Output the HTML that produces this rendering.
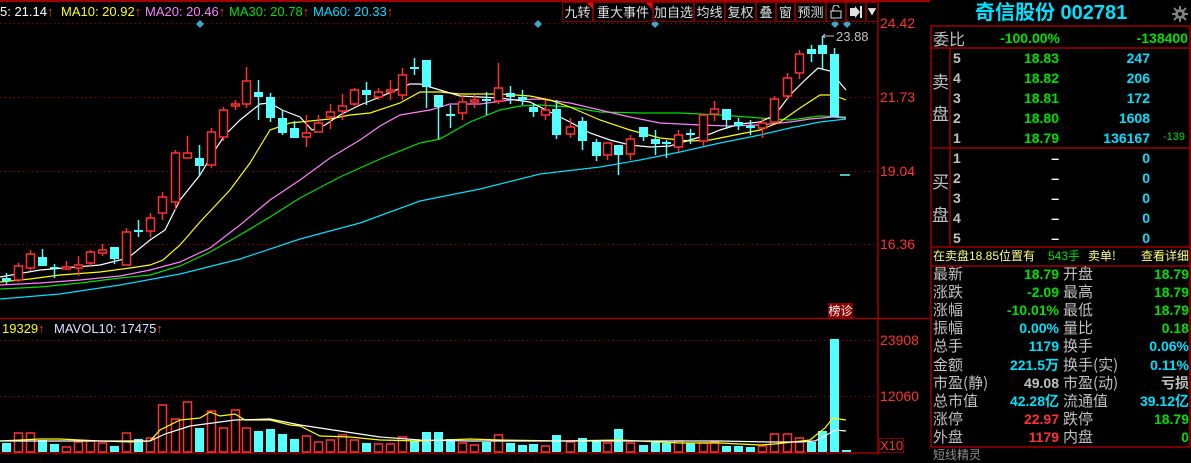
<!DOCTYPE html>
<html><head><meta charset="utf-8"><style>
*{margin:0;padding:0;box-sizing:border-box}
body{width:1191px;height:455px;background:#000;overflow:hidden;position:relative;font-family:"Liberation Sans","Noto Sans CJK SC",sans-serif;}
.t{position:absolute;white-space:nowrap;line-height:1}
.ar{color:#ff3232;font-weight:bold;font-size:13px}
.ax{position:absolute;color:#ff3232;font-size:14px;left:880px;line-height:1}
.btn{position:absolute;top:2px;height:20px;border:1px solid #800000;color:#e0e0e0;font-size:13px;line-height:18px;text-align:center;white-space:nowrap;overflow:hidden;font-family:"Noto Sans CJK SC",sans-serif}
.lbl{position:absolute;color:#c0c0c0;font-size:15px;font-family:"Noto Sans CJK SC",sans-serif;line-height:1;white-space:nowrap}
.v{position:absolute;font-size:14px;font-weight:bold;line-height:1;text-align:right;white-space:nowrap}
</style></head><body>
<svg width="1191" height="455" style="position:absolute;left:0;top:0">
<line x1="0" y1="1" x2="930" y2="1" stroke="#a00000" stroke-width="2"/>
<g stroke="#900000" stroke-dasharray="1.5,3" stroke-width="1">
<line x1="0" y1="23.5" x2="876" y2="23.5"/><line x1="0" y1="97.5" x2="876" y2="97.5"/>
<line x1="0" y1="171.5" x2="876" y2="171.5"/><line x1="0" y1="244.5" x2="876" y2="244.5"/>
<line x1="0" y1="340.5" x2="876" y2="340.5"/><line x1="0" y1="396.5" x2="876" y2="396.5"/>
</g>
<g stroke="#a00000" stroke-width="1.5">
<line x1="878" y1="0" x2="878" y2="455"/><line x1="0" y1="318.5" x2="930" y2="318.5"/>
<line x1="0" y1="453" x2="878" y2="453"/>
</g>
<g fill="#3fa7c8">
<path d="M200 20l4 4-4 4-4-4z"/><path d="M538 20l4 4-4 4-4-4z"/><path d="M655 20l4 4-4 4-4-4z"/><path d="M835 20l4 4-4 4-4-4z"/><path d="M847 20l4 4-4 4-4-4z"/>
</g>
<g fill="none" stroke-width="1.2">
<polyline stroke="#00e0ff" points="0,299 60,294 120,285 180,274 240,259 300,239 360,223 420,201 480,189 540,174 600,167 640,160 680,152 720,143 760,135 790,128 820,122 846,119"/>
<polyline stroke="#00e000" points="0,289 40,287 80,283 120,278 150,275 180,266 210,252 240,235 270,217 300,198 340,177 380,159 420,143 440,139 470,122 500,110 520,106 540,105 570,107 600,112 640,113 680,113 720,115 760,118 790,120 820,116 846,117"/>
<polyline stroke="#ff80ff" points="0,285 40,283 80,280 120,276 150,270 180,262 210,248 240,225 270,200 300,180 330,158 360,140 380,126 400,115 430,110 450,104 480,104 510,100 540,99 570,103 600,110 630,117 660,123 700,125 730,126 760,125 790,122 810,119 833,117 846,118"/>
<polyline stroke="#ffff00" points="0,282 30,279 60,275 100,272 130,268 150,265 163,260 180,245 200,222 230,190 250,163 270,130 290,123 310,121 330,119 350,115 370,113 400,103 420,92 440,92 460,94 500,94 530,96 550,100 570,107 600,120 630,130 660,138 690,141 710,140 730,136 760,130 780,122 800,108 820,95 833,95 846,100"/>
<polyline stroke="#ffffff" points="0,277 40,270 100,265 128,258 150,240 165,230 180,200 200,175 215,150 225,135 240,120 260,104 270,103 282,110 300,117 312,130 325,125 340,115 360,105 380,97 410,84 420,84 440,90 460,96 480,97 500,98 530,102 550,112 570,122 590,133 610,140 630,145 650,147 670,146 690,140 710,134 720,130 740,124 760,122 775,115 790,95 805,80 818,68 830,71 846,90"/>
</g>
<line x1="840" y1="175" x2="850" y2="175" stroke="#54ffff" stroke-width="1.5"/>
<g id="candles" stroke-width="1.5"></g>
<g id="vols"></g>
<g fill="none" stroke-width="1.2">
<polyline stroke="#ffff00" points="0,441 40,439 60,439 100,441 130,442 150,441 160,430 180,420 200,418 210,412 220,416 235,414 245,420 270,420 290,425 300,426 320,436 350,437 380,440 420,441 470,439 500,440 560,441 620,440 680,443 720,443 760,445 775,444 810,440 825,428 833,418 846,420"/>
<polyline stroke="#ffffff" points="0,441 60,441 120,441 150,441 165,434 190,426 220,422 235,420 270,419 300,425 340,431 380,437 420,440 470,441 520,441 560,441 620,441 680,441 720,441 770,442 800,442 815,441 825,436 835,430 846,431"/>
</g>
<path d="M826 36h-3l2-2m-2 2l2 2" stroke="#c0c0c0" fill="none"/>
<line x1="823" y1="36" x2="834" y2="36" stroke="#c0c0c0"/>
<rect x="931" y="26" width="259" height="421" fill="none" stroke="#a00000" stroke-width="1.5"/>
<g stroke="#a00000" stroke-width="1.5">
<line x1="931" y1="48" x2="1190" y2="48"/><line x1="931" y1="148" x2="1190" y2="148"/>
<line x1="931" y1="247" x2="1190" y2="247"/><line x1="931" y1="266" x2="1190" y2="266"/>
<line x1="950" y1="48" x2="950" y2="247"/>
</g>
<g fill="#808080"><circle cx="1180" cy="14" r="5"/></g>
<g stroke="#808080" stroke-width="2"><line x1="1180" y1="6" x2="1180" y2="22"/><line x1="1172" y1="14" x2="1188" y2="14"/><line x1="1174" y1="8" x2="1186" y2="20"/><line x1="1186" y1="8" x2="1174" y2="20"/></g>
<circle cx="1180" cy="14" r="2" fill="#000"/>
</svg>
<script>
var C=[[6,'c',278,281,273,284],[18,'r',266,280,263,282],[30,'r',254,268,250,271],[42,'c',257,266,249,266],[54,'c',267,268,264,278],[66,'r',267,269,261,270],[78,'r',265,268,256,276],[90,'r',252,263,250,267],[102,'r',250,253,244,256],[114,'c',247,259,247,264],[126,'r',232,265,228,265],[138,'c',230,232,220,237],[150,'r',218,231,213,237],[162,'r',197,213,192,220],[175,'r',153,202,150,210],[187,'r',153,158,136,158],[199,'c',158,166,145,175],[211,'r',132,165,128,168],[223,'r',110,137,107,141],[235,'r',104,106,100,110],[246,'r',81,104,67,108],[258,'c',92,97,80,120],[270,'c',97,118,93,122],[282,'c',118,133,110,135],[294,'c',128,138,121,138],[306,'r',133,137,115,147],[318,'r',123,132,115,132],[330,'r',112,117,104,129],[342,'r',106,111,94,120],[354,'r',90,104,88,106],[366,'c',90,95,82,105],[378,'r',92,97,88,100],[390,'r',90,92,80,100],[402,'r',75,95,68,100],[414,'c',67,69,58,75],[426,'c',60,87,60,108],[438,'c',95,107,95,139],[450,'c',114,116,105,128],[462,'r',102,113,95,120],[474,'r',100,102,95,108],[486,'c',99,101,92,115],[498,'r',88,101,63,104],[510,'c',93,97,86,104],[522,'c',97,100,90,105],[533,'c',107,112,103,117],[545,'r',110,115,100,120],[556,'c',109,135,100,139],[570,'r',127,134,118,138],[582,'c',121,141,117,150],[596,'c',142,156,139,161],[607,'r',143,155,143,160],[618,'c',145,155,145,175],[630,'r',139,154,135,160],[643,'c',127,137,127,141],[655,'c',139,144,130,155],[666,'c',142,144,140,158],[678,'r',135,147,130,152],[690,'c',133,135,129,144],[703,'r',115,141,115,146],[714,'r',109,114,101,121],[726,'c',109,120,109,129],[738,'c',122,126,118,130],[750,'c',126,128,120,135],[762,'r',123,128,118,138],[774,'r',99,122,96,123],[787,'r',78,96,73,100],[799,'r',54,73,50,79],[811,'c',49,54,45,62],[822,'c',45,54,36,70],[834,'c',54,117,48,117]];
var s='';C.forEach(function(d){var x=d[0],col=d[1]=='r'?'#ff3232':'#54ffff';s+='<line x1="'+(x+.5)+'" y1="'+d[4]+'" x2="'+(x+.5)+'" y2="'+d[5]+'" stroke="'+col+'"/>';var h=Math.max(d[3]-d[2],1.5);if(d[1]=='r')s+='<rect x="'+(x-3.5)+'" y="'+d[2]+'" width="8" height="'+h+'" fill="#000" stroke="'+col+'"/>';else s+='<rect x="'+(x-4)+'" y="'+d[2]+'" width="9" height="'+h+'" fill="'+col+'" stroke="none"/>';});
document.getElementById('candles').innerHTML=s;
var V=[[6,'c',443],[18,'r',433],[30,'r',433],[42,'c',440],[54,'c',444],[66,'r',447],[78,'r',442],[90,'r',441],[102,'r',443],[114,'c',446],[126,'r',433],[138,'c',439],[150,'r',438],[162,'r',405],[175,'r',419],[187,'r',402],[199,'c',428],[211,'r',411],[223,'r',428],[235,'r',410],[246,'r',428],[258,'c',431],[270,'c',429],[282,'c',434],[294,'c',439],[306,'r',436],[318,'r',442],[330,'r',440],[342,'r',435],[354,'r',440],[366,'c',443],[378,'r',444],[390,'r',444],[402,'r',437],[414,'c',441],[426,'c',432],[438,'c',432],[450,'c',439],[462,'r',443],[474,'r',445],[486,'c',442],[498,'r',435],[510,'c',443],[522,'c',445],[533,'c',444],[545,'r',446],[556,'c',435],[570,'r',442],[582,'c',438],[596,'c',441],[607,'r',443],[618,'c',429],[630,'r',443],[643,'c',445],[655,'c',441],[666,'c',443],[678,'r',441],[690,'c',443],[703,'r',443],[714,'r',442],[726,'c',446],[738,'c',446],[750,'c',447],[762,'r',446],[774,'r',434],[787,'r',434],[799,'r',438],[811,'c',442],[822,'c',431],[834,'c',339],[846,'c',450]];
s='';V.forEach(function(d){var x=d[0];if(d[1]=='r')s+='<rect x="'+(x-3.5)+'" y="'+d[2]+'" width="8" height="'+(452-d[2])+'" fill="none" stroke="#ff3232" stroke-width="1.5"/>';else s+='<rect x="'+(x-4)+'" y="'+d[2]+'" width="9" height="'+(452-d[2])+'" fill="#54ffff"/>';});
document.getElementById('vols').innerHTML=s;
</script>

<div class="t" style="left:0;top:5px;font-size:13px;color:#fff">5: 21.14<span class="ar">↑</span></div>
<div class="t" style="left:61px;top:5px;font-size:13px;color:#ffff00">MA10: 20.92<span class="ar">↑</span></div>
<div class="t" style="left:145px;top:5px;font-size:13px;color:#ff80ff">MA20: 20.46<span class="ar">↑</span></div>
<div class="t" style="left:229px;top:5px;font-size:13px;color:#00e000">MA30: 20.78<span class="ar">↑</span></div>
<div class="t" style="left:313px;top:5px;font-size:13px;color:#00e0ff">MA60: 20.33<span class="ar">↑</span></div>
<div class="t" style="left:836px;top:30px;font-size:13px;color:#c0c0c0">23.88</div>

<div class="btn" style="left:562px;width:31px">九转</div>
<div class="btn" style="left:593px;width:60px">重大事件</div>
<div class="btn" style="left:653px;width:41px">加自选</div>
<div class="btn" style="left:694px;width:31px">均线</div>
<div class="btn" style="left:725px;width:31px">复权</div>
<div class="btn" style="left:756px;width:20px">叠</div>
<div class="btn" style="left:776px;width:19px">窗</div>
<div class="btn" style="left:795px;width:31px">预测</div>
<div class="btn" style="left:826px;width:20px"><svg width="12" height="14" style="margin-top:2px"><rect x="1" y="6" width="10" height="7" fill="none" stroke="#e0e0e0"/><path d="M3 6V3a3 3 0 0 1 6 0" fill="none" stroke="#e0e0e0"/></svg></div>
<div class="btn" style="left:846px;width:20px"><svg width="14" height="12" style="margin-top:3px"><path d="M1 2h5V0l5 6-5 6v-2H1z" fill="#e0e0e0"/><rect x="11" y="0" width="2" height="12" fill="#e0e0e0"/></svg></div>
<div class="btn" style="left:866px;width:12px;font-size:9px">▼</div>
<div style="position:absolute;left:587px;top:3px;width:0;height:0;border-left:6px solid transparent;border-top:6px solid #ff0000"></div>
<div style="position:absolute;left:646px;top:3px;width:0;height:0;border-left:6px solid transparent;border-top:6px solid #ff0000"></div>

<div class="ax" style="top:16px">24.42</div>
<div class="ax" style="top:90px">21.73</div>
<div class="ax" style="top:164px">19.04</div>
<div class="ax" style="top:237px">16.36</div>
<div class="ax" style="top:333px">23908</div>
<div class="ax" style="top:389px">12060</div>
<div class="t" style="left:879px;top:438px;width:25px;height:15px;border:1px solid #800000;color:#ff3232;font-size:13px;line-height:13px">X10</div>
<div class="t" style="left:828px;top:303px;width:25px;height:15px;background:#8b0000;color:#fff;font-size:12px;line-height:15px;text-align:center;font-family:'Noto Sans CJK SC',sans-serif">榜诊</div>
<div class="t" style="left:2px;top:322px;font-size:13px;color:#ffff00">19329<span class="ar">↑</span></div>
<div class="t" style="left:54px;top:322px;font-size:13px;color:#e0e0ff">MAVOL10: 17475<span class="ar">↑</span></div>

<div class="t" style="left:975px;top:3px;font-size:20px;font-weight:bold;color:#00e0ff;font-family:'Liberation Sans','Noto Sans CJK SC',sans-serif">奇信股份 002781</div>
<div class="lbl" style="left:933px;top:30px;font-size:16px">委比</div>
<div class="v" style="left:960px;width:100px;top:31px;color:#00e000">-100.00%</div>
<div class="v" style="left:1080px;width:108px;top:31px;color:#00e000">-138400</div>
<div class="lbl" style="left:932px;top:72px;font-size:17px">卖</div>
<div class="lbl" style="left:932px;top:104px;font-size:17px">盘</div>
<div class="lbl" style="left:932px;top:172px;font-size:17px">买</div>
<div class="lbl" style="left:932px;top:205px;font-size:17px">盘</div>

<div class="v" style="left:953px;top:51px;color:#c0c0c0">5</div><div class="v" style="left:960px;width:99px;top:51px;color:#00e000">18.83</div><div class="v" style="left:1060px;width:90px;top:51px;color:#00e0ff">247</div>
<div class="v" style="left:953px;top:71px;color:#c0c0c0">4</div><div class="v" style="left:960px;width:99px;top:71px;color:#00e000">18.82</div><div class="v" style="left:1060px;width:90px;top:71px;color:#00e0ff">206</div>
<div class="v" style="left:953px;top:91px;color:#c0c0c0">3</div><div class="v" style="left:960px;width:99px;top:91px;color:#00e000">18.81</div><div class="v" style="left:1060px;width:90px;top:91px;color:#00e0ff">172</div>
<div class="v" style="left:953px;top:111px;color:#c0c0c0">2</div><div class="v" style="left:960px;width:99px;top:111px;color:#00e000">18.80</div><div class="v" style="left:1060px;width:90px;top:111px;color:#00e0ff">1608</div>
<div class="v" style="left:953px;top:131px;color:#c0c0c0">1</div><div class="v" style="left:960px;width:99px;top:131px;color:#00e000">18.79</div><div class="v" style="left:1060px;width:90px;top:131px;color:#00e0ff">136167</div>
<div class="t" style="left:1163px;top:132px;font-size:11px;color:#00e000">-139</div>

<div class="v" style="left:953px;top:151px;color:#c0c0c0">1</div><div class="v" style="left:960px;width:99px;top:151px;color:#fff">–</div><div class="v" style="left:1060px;width:90px;top:151px;color:#00e0ff">0</div>
<div class="v" style="left:953px;top:171px;color:#c0c0c0">2</div><div class="v" style="left:960px;width:99px;top:171px;color:#fff">–</div><div class="v" style="left:1060px;width:90px;top:171px;color:#00e0ff">0</div>
<div class="v" style="left:953px;top:191px;color:#c0c0c0">3</div><div class="v" style="left:960px;width:99px;top:191px;color:#fff">–</div><div class="v" style="left:1060px;width:90px;top:191px;color:#00e0ff">0</div>
<div class="v" style="left:953px;top:211px;color:#c0c0c0">4</div><div class="v" style="left:960px;width:99px;top:211px;color:#fff">–</div><div class="v" style="left:1060px;width:90px;top:211px;color:#00e0ff">0</div>
<div class="v" style="left:953px;top:231px;color:#c0c0c0">5</div><div class="v" style="left:960px;width:99px;top:231px;color:#fff">–</div><div class="v" style="left:1060px;width:90px;top:231px;color:#00e0ff">0</div>

<div class="t" style="left:933px;top:250px;font-size:12px;color:#ffff80;font-family:'Liberation Sans','Noto Sans CJK SC',sans-serif">在卖盘18.85位置有</div>
<div class="t" style="left:1048px;top:250px;font-size:12px;color:#00e000;font-family:'Liberation Sans','Noto Sans CJK SC',sans-serif">543手</div>
<div class="t" style="left:1088px;top:250px;font-size:12px;color:#ffff80;font-family:'Noto Sans CJK SC',sans-serif">卖单!</div>
<div class="t" style="left:1141px;top:250px;font-size:12px;color:#ffff80;font-family:'Noto Sans CJK SC',sans-serif">查看详细</div>

<div id="stats"></div>
<div class="lbl" style="left:933px;top:449px;font-size:12px;color:#909090">短线精灵</div>
<script>
var R=[['最新','18.79','#00e000','开盘','18.79','#00e000'],['涨跌','-2.09','#00e000','最高','18.79','#00e000'],['涨幅','-10.01%','#00e000','最低','18.79','#00e000'],['振幅','0.00%','#00e0ff','量比','0.18','#00e000'],['总手','1179','#00e0ff','换手','0.06%','#00e0ff'],['金额','221.5万','#00e0ff','换手(实)','0.11%','#00e0ff'],['市盈(静)','49.08','#c0c0c0','市盈(动)','亏损','#c0c0c0'],['总市值','42.28亿','#00e0ff','流通值','39.12亿','#00e0ff'],['涨停','22.97','#ff3232','跌停','18.79','#00e000'],['外盘','1179','#ff3232','内盘','0','#00e000']];
var h='';R.forEach(function(r,i){var y=266+i*18.1;h+='<div class="lbl" style="left:933px;top:'+y+'px">'+r[0]+'</div><div class="v" style="left:990px;width:69px;top:'+(y+1)+'px;color:'+r[2]+'">'+r[1]+'</div><div class="lbl" style="left:1063px;top:'+y+'px">'+r[3]+'</div><div class="v" style="left:1110px;width:79px;top:'+(y+1)+'px;color:'+r[5]+'">'+r[4]+'</div>';});
document.getElementById('stats').innerHTML=h;
</script>
</body></html>
